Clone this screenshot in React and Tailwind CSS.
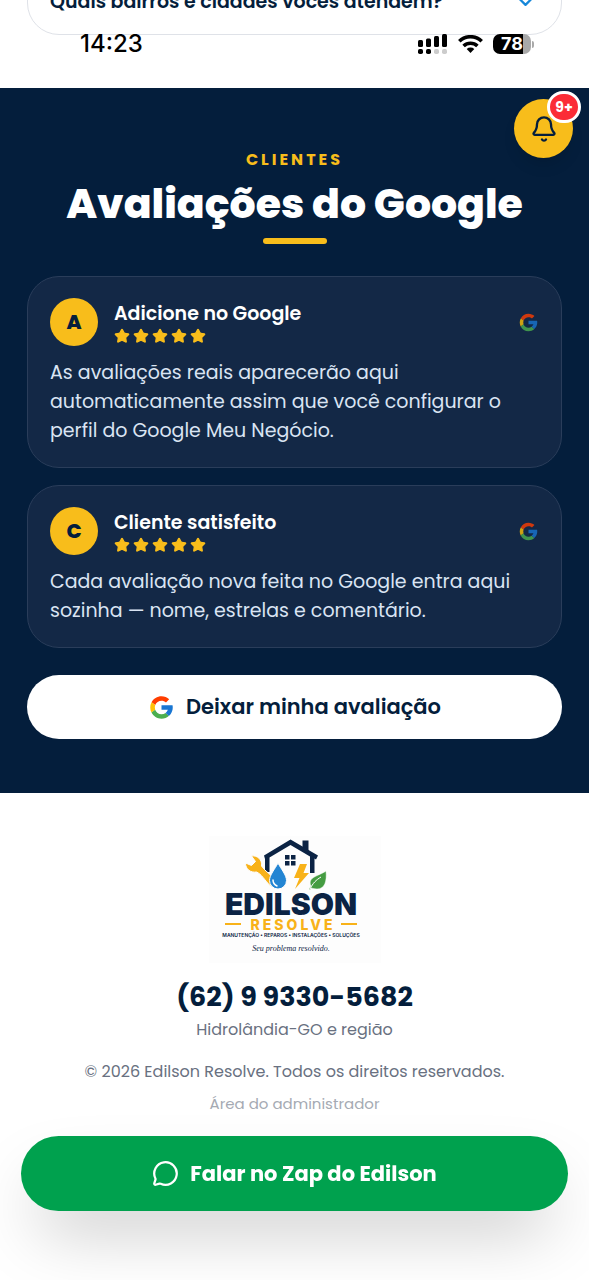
import React from 'react';
import { Bell, ChevronDown, MessageCircle, Star } from 'lucide-react';

const reviews = [
  {
    id: 1,
    name: 'Adicione no Google',
    text: 'As avaliações reais aparecerão aqui automaticamente assim que você configurar o perfil do Google Meu Negócio.',
  },
  {
    id: 2,
    name: 'Cliente satisfeito',
    text: 'Cada avaliação nova feita no Google entra aqui sozinha — nome, estrelas e comentário.',
  },
];

const GoogleIcon = ({ className }) => (
  <svg viewBox="0 0 48 48" className={className} aria-hidden="true">
    <path fill="#FF3D00" d="M6.306 14.691l6.571 4.819C14.655 15.108 18.961 12 24 12c3.059 0 5.842 1.154 7.961 3.039l5.657-5.657C34.046 6.053 29.268 4 24 4 16.318 4 9.656 8.337 6.306 14.691z" />
    <path fill="#FFC107" d="M6.306 14.691A19.9 19.9 0 0 0 4 24c0 3.2.8 6.3 2.2 9l6.5-5A12 12 0 0 1 12.877 19.51z" />
    <path fill="#4CAF50" d="M24 44c5.166 0 9.86-1.977 13.409-5.192l-6.19-5.238A11.91 11.91 0 0 1 24 36c-5.202 0-9.619-3.317-11.283-7.946l-6.522 5.025C9.505 39.556 16.227 44 24 44z" />
    <path fill="#1976D2" d="M43.611 20.083H24v8h11.303a12.04 12.04 0 0 1-4.087 5.571l6.19 5.238C36.971 39.205 44 34 44 24c0-1.341-.138-2.65-.389-3.917z" />
  </svg>
);

const StatusBar = () => (
  <div className="absolute inset-x-0 top-0 flex items-center justify-between pt-7 pr-[55px] pl-20 text-black">
    <span className="font-['Inter',sans-serif] text-2xl font-medium">14:23</span>
    <div className="flex items-center gap-[10px]">
      <svg width="30" height="20" viewBox="0 0 30 20" aria-hidden="true">
        <rect x="0" y="6" width="5" height="7" rx="1.5" />
        <rect x="8" y="4.5" width="5" height="8.5" rx="1.5" />
        <rect x="16" y="2" width="5" height="11" rx="1.5" />
        <rect x="24" y="0" width="5" height="13" rx="1.5" />
        <rect x="0" y="15" width="5" height="5" rx="1.8" />
        <rect x="8" y="15" width="5" height="5" rx="1.8" />
        <rect x="16" y="15" width="5" height="5" rx="1.8" fill="#ccc" />
        <rect x="24" y="15" width="5" height="5" rx="1.8" fill="#ccc" />
      </svg>
      <svg width="25" height="18" viewBox="0 0 25 18" fill="none" stroke="#000" strokeWidth="3.6" aria-hidden="true">
        <path d="M1.3 6.2a16.2 16.2 0 0 1 22.4 0" />
        <path d="M5.6 11a10 10 0 0 1 13.8 0" />
        <path d="M12.5 18l-3.8-4.1a5.6 5.6 0 0 1 7.6 0z" fill="#000" stroke="none" />
      </svg>
      <div className="flex items-center gap-px">
        <div className="flex h-5 w-[38px] items-center justify-center rounded-[7px] bg-linear-to-r from-black from-78% to-[#a9a9a9] to-78% font-['Inter',sans-serif] text-lg font-bold text-white">
          78
        </div>
        <div className="h-[7px] w-[2px] rounded-r-full bg-[#a9a9a9]" />
      </div>
    </div>
  </div>
);

const ReviewCard = ({ review }) => (
  <article className="rounded-[32px] border border-[#2a3d5a] bg-[#132846] px-[22px] pt-[21px] pb-[22px]">
    <div className="flex items-center gap-4">
      <div className="flex size-12 items-center justify-center rounded-full bg-[#f8bd1b] text-xl font-extrabold text-[#041e3c]">
        {review.name[0]}
      </div>
      <div className="flex-1">
        <h3 className="text-[19px] leading-7 font-semibold text-white">{review.name}</h3>
        <div className="flex gap-[3px]" role="img" aria-label="5 estrelas">
          {[1, 2, 3, 4, 5].map(n => (
            <Star key={n} size={16} fill="#f8bd1b" color="#f8bd1b" />
          ))}
        </div>
      </div>
      <GoogleIcon className="size-[21px] opacity-80" />
    </div>
    <p className="mt-3 text-[19px] leading-[29px] text-[#dae4f3]">{review.text}</p>
  </article>
);

const Logo = () => (
  <svg viewBox="0 0 172 127" className="w-[172px] bg-[#fdfdfd] font-['Inter',sans-serif]" role="img" aria-label="Edilson Resolve">
    {/* casa */}
    <path d="M93.500 14V4.500h6V18z" fill="#0b2344" />
    <path d="M55 19.500L81.500 3.500 109 19.500l-2 4-1.500-1V37h-4.500V20.500L81.500 9 60.500 21.500V36H56V23z" fill="#0b2344" />
    <path d="M76 19h4.500v4.500H76zM82 19h4.500v4.500H82zM76 25h4.500v4.500H76zM82 25h4.500v4.500H82z" fill="#0b2344" />
    {/* chave */}
    <path d="M42.500 20c6-1 11 4 10 10 4 6 11 9 14 15 1 4-3 7-6 4-5-5-8-11-13-13-6 1-11-3-11-9l6 2.500 4-4z" fill="#f8b219" stroke="#fdfdfd" strokeWidth="1" />
    {/* gota */}
    <path d="M69 27c3 6 8.500 12 8.500 17.500a8.500 8.500 0 0 1-17 0c0-5.500 5.500-11.500 8.500-17.500z" fill="#2385d3" stroke="#fdfdfd" strokeWidth="1" />
    <path d="M64 44c0 3 2 5 4 6" stroke="#fff" strokeWidth="1.500" fill="none" strokeLinecap="round" />
    {/* raio */}
    <path d="M91 28h7l-3.500 9H100L86 53l4.500-11H85z" fill="#f8b219" />
    {/* folha */}
    <path d="M117 35c1 10-1 18-9 18-3 0-5-1-6-1l-1 2-1-1 2-3c-4-9 8-10 15-15z" fill="#459c42" stroke="#fdfdfd" strokeWidth="0.500" />
    <path d="M101 53c3-6 6-9 11-12" stroke="#fff" strokeWidth="1" fill="none" />
    <text x="82" y="79" textAnchor="middle" fontSize="30" fontWeight="900" fill="#0b2344">EDILSON</text>
    <path d="M16 88h16M132 88h16" stroke="#f8b219" strokeWidth="1.800" />
    <text x="84" y="93.500" textAnchor="middle" fontSize="14" fontWeight="800" letterSpacing="3" fill="#f8b219">RESOLVE</text>
    <text x="82" y="101" textAnchor="middle" fontSize="5" fontWeight="600" fill="#0b2344">MANUTENÇÃO • REPAROS • INSTALAÇÕES • SOLUÇÕES</text>
    <text x="82" y="115" textAnchor="middle" fontSize="8" fontStyle="italic" fill="#0b2344" className="font-['Liberation_Serif',cursive]">Seu problema resolvido.</text>
  </svg>
);

export default function App() {
  return (
    <div className="relative min-h-screen bg-white font-['Poppins','Inter',sans-serif] text-[#041e3c]">
      <div className="h-[88px] overflow-hidden px-[27px]">
        <button type="button" className="-mt-8 flex w-full items-center justify-between rounded-[32px] border border-[#dfe2e8] px-[22px] pt-[19px] pb-[19px] text-left text-[19px] leading-[26px] font-semibold">
          Quais bairros e cidades vocês atendem?
          <ChevronDown size={27} color="#1687d9" />
        </button>
      </div>
      <StatusBar />

      <section className="bg-[#041e3c] px-[27px] pt-14 pb-[54px]">
        <div className="flex flex-col items-center text-center">
          <p className="text-base leading-8 font-bold tracking-[3px] text-[#f8bd1b]">CLIENTES</p>
          <h2 className="text-[41px] leading-[56px] font-extrabold text-white">Avaliações do Google</h2>
          <div className="mt-[6px] h-[6px] w-16 rounded-full bg-[#f8bd1b]" />
        </div>
        <div className="mt-8 flex flex-col gap-[17px]">
          {reviews.map(review => (
            <ReviewCard key={review.id} review={review} />
          ))}
        </div>
        <a href="#avaliar" className="mt-[27px] flex h-16 items-center justify-center gap-[11px] rounded-full bg-white text-[21px] font-semibold">
          <GoogleIcon className="size-[27px]" />
          Deixar minha avaliação
        </a>
      </section>

      <footer className="flex flex-col items-center px-[27px] pt-[43px] pb-40 text-center">
        <Logo />
        <a href="tel:+5562993305682" className="mt-4 text-[27px] leading-9 font-bold">(62) 9 9330-5682</a>
        <p className="mt-[3px] text-base leading-6 text-[#697181]">Hidrolândia-GO e região</p>
        <p className="mt-[18px] text-base leading-6 text-[#697181]">© 2026 Edilson Resolve. Todos os direitos reservados.</p>
        <a href="#admin" className="mt-2 text-[15px] leading-6 text-[#a5aab3]">Área do administrador</a>
      </footer>

      <button type="button" aria-label="Notificações" className="fixed top-[99px] right-4 flex size-[59px] items-center justify-center rounded-full bg-[#f8bd1b] shadow-lg">
        <Bell size={28} />
        <span className="absolute -top-2 -right-2 flex h-8 w-[34px] items-center justify-center rounded-full border-[3px] border-white bg-[#fb2c36] text-sm font-bold text-white">
          9+
        </span>
      </button>

      <a
        href="#whatsapp"
        className="fixed inset-x-[21px] bottom-[69px] flex h-[75px] items-center justify-center gap-[11px] rounded-full bg-[#00a14e] text-[21px] font-bold text-white shadow-[0_33px_67px_-16px_rgba(0,0,0,0.25)]"
      >
        <MessageCircle size={27} />
        Falar no Zap do Edilson
      </a>
    </div>
  );
}
